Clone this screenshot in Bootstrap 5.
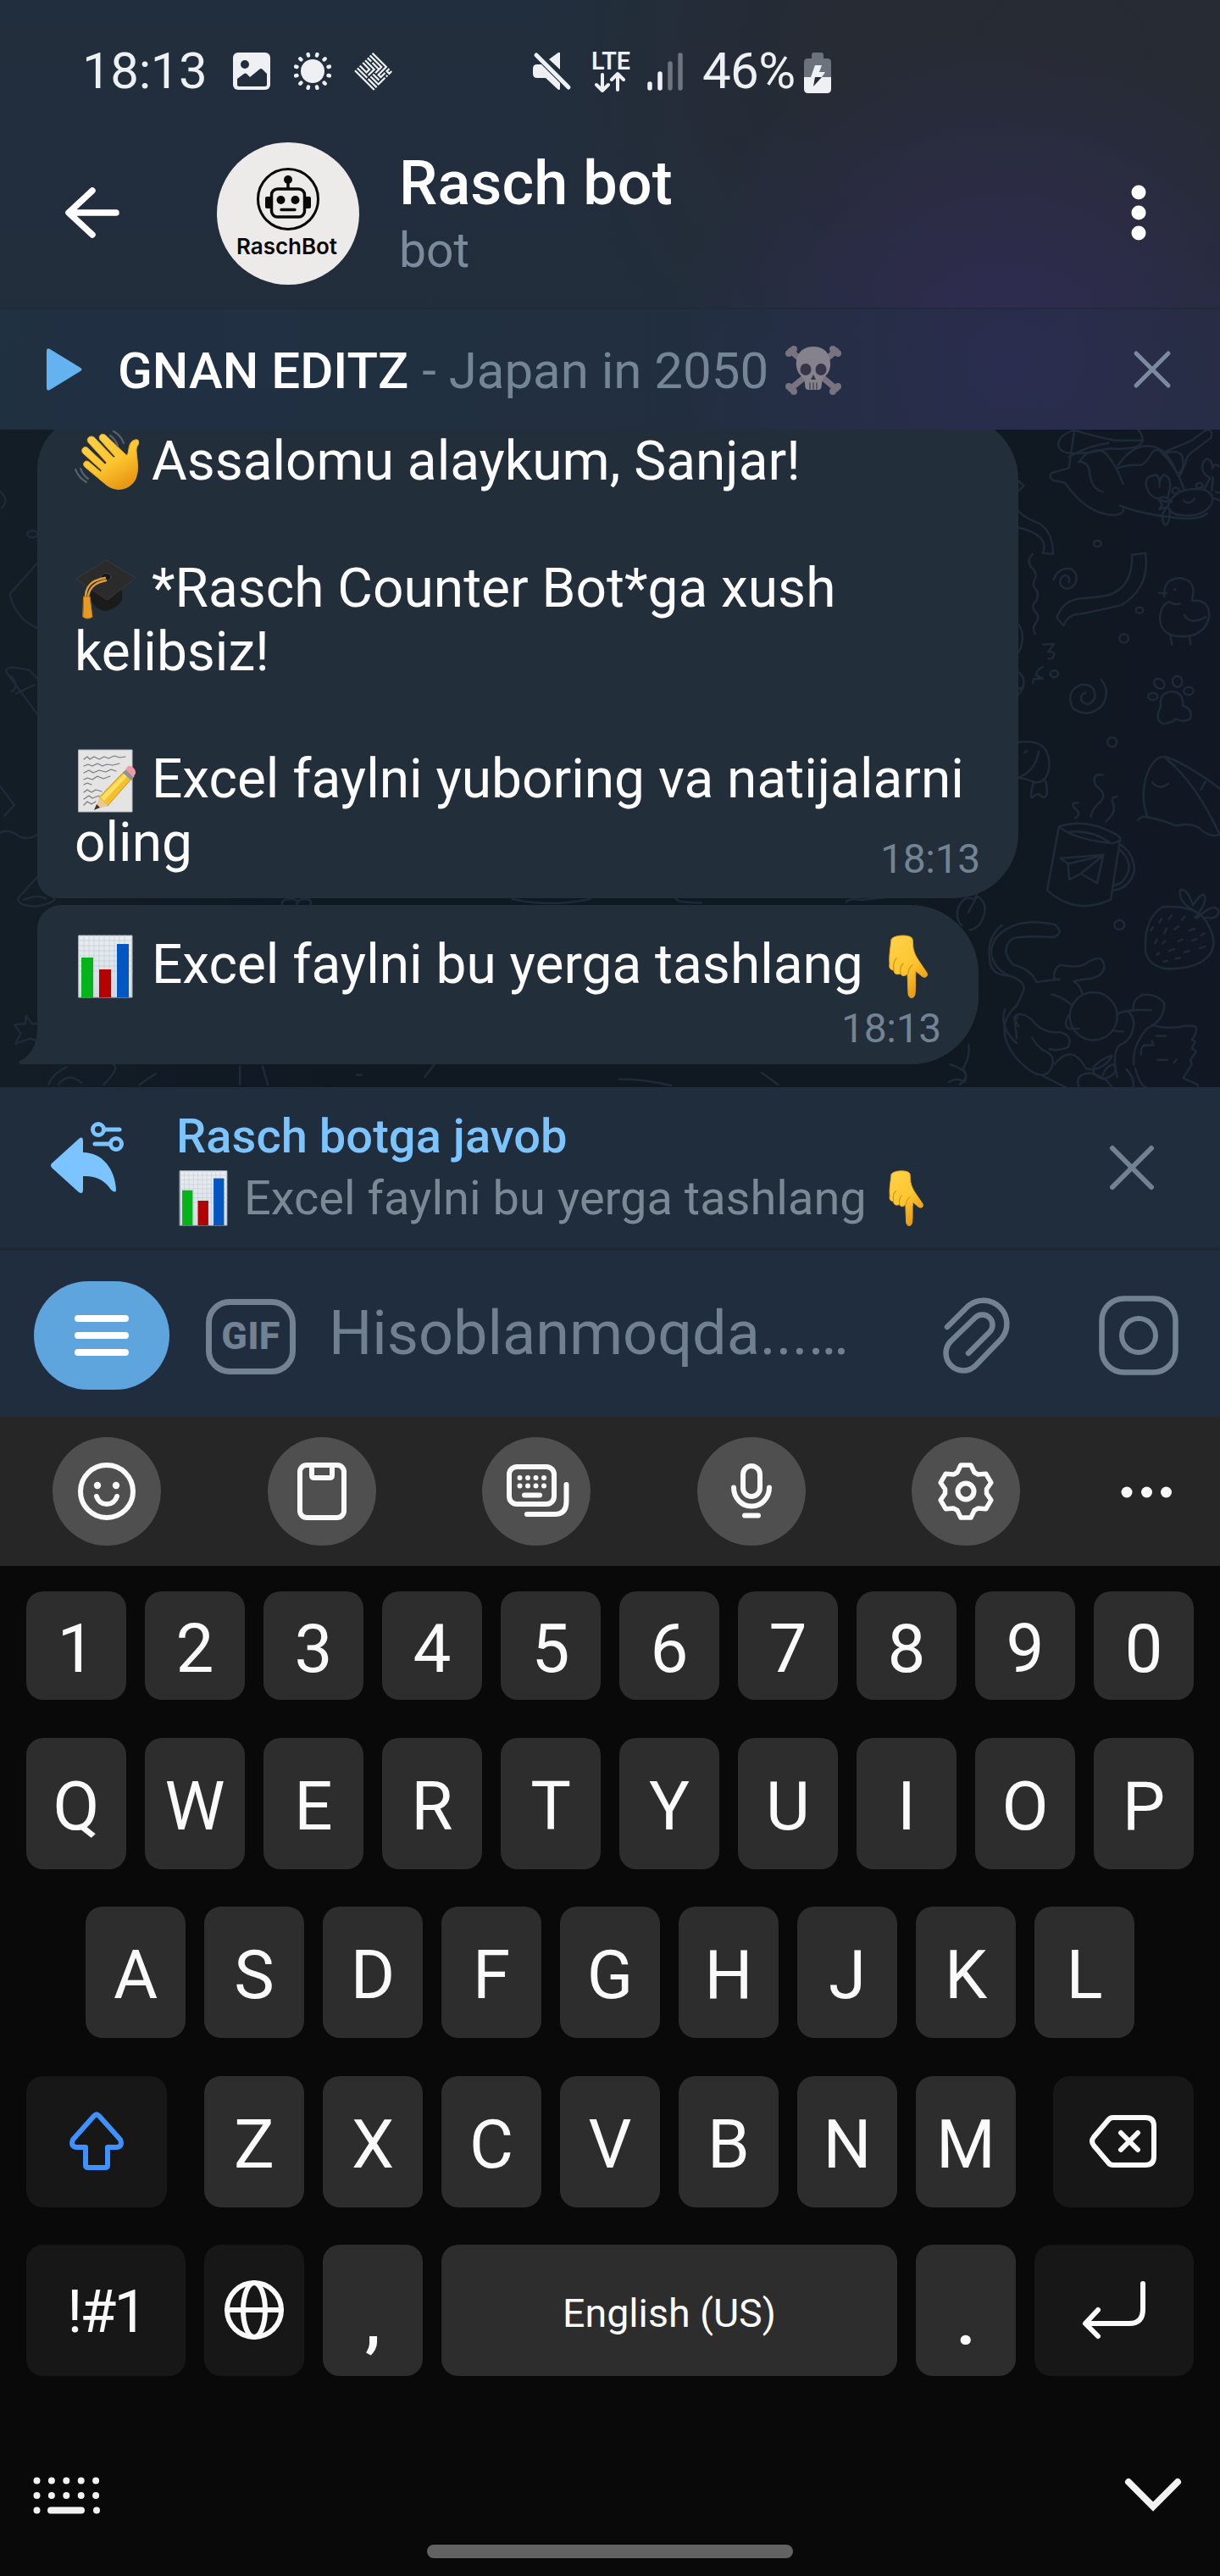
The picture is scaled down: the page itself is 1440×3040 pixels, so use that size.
<!DOCTYPE html>
<html lang="uz">
<head>
<meta charset="utf-8">
<meta name="viewport" content="width=device-width, initial-scale=1">
<title>Rasch bot</title>
<link href="https://cdn.jsdelivr.net/npm/bootstrap@5.3.0/dist/css/bootstrap.min.css" rel="stylesheet">
<style>
body{width:1440px;height:3040px;margin:0;background:#090909;font-family:Roboto,"Liberation Sans",sans-serif;overflow:hidden;color:#fff}
svg{display:block;flex:none;fill:none;stroke-linecap:round;stroke-linejoin:round}
.topzone{height:507px;background:radial-gradient(circle 400px at 1190px 430px,#2f2c55 0,rgba(46,44,80,.75) 35%,rgba(42,44,68,0) 100%),radial-gradient(ellipse 620px 480px at 1250px 60px,#272b33 0,#262b35 50%,rgba(38,44,53,0) 100%),linear-gradient(#212e3d,#222d3b)}
.statusbar{height:168px;padding:0 0 0 97px;color:#eef0f3;font-size:60px;line-height:168px}
.statusbar .clock{width:151px;letter-spacing:-.4px}
.statusbar .pct{width:109px;letter-spacing:-.6px}
.chathead{height:195px}
.chathead .peer{font-size:72px;font-weight:500;line-height:84px;letter-spacing:.1px}
.chathead .kind{font-size:57px;line-height:66px;color:#7a8b9b}
.player{height:144px;border-top:2px solid #1f2b39;background:linear-gradient(90deg,rgba(31,49,68,.75),rgba(36,46,72,.25));font-size:60px;line-height:142px}
.player span{padding-top:3px}
.song{font-weight:500}
.muted{color:#748595}
.chat{height:776px;background:linear-gradient(90deg,#121d26,#101822 30%,#111823);padding:0 0 27px 44px}
.wall{position:absolute;left:0;top:0}
.wall path,.wall circle,.wall ellipse{vector-effect:non-scaling-stroke;stroke:#1e2a38;stroke-width:2.5}
.bubble{position:relative;background:#222e3a;font-size:64px;line-height:75px;color:#fdfdfe}
.bub1{width:1158px;padding:17px 45px 28px 44px;border-radius:64px 76px 76px 24px}
.bub2{width:1111px;height:188px;padding:33px 40px 14px 44px;border-radius:28px 80px 80px 0}
.stamp{font-size:48px;letter-spacing:-.3px;color:#748393}
.bub1 .stamp{margin:19px 0 -19px}
.bub2 .stamp{margin-top:10px;margin-right:4px;line-height:56px}
.tail{position:absolute;left:-22px;bottom:0}
.ico{display:inline-block;width:76px;height:76px;vertical-align:-10px;margin:-8px -1px -8px 0}
.reply{height:193px;background:#202d3d;border-bottom:4px solid #1c2732}
.reply .rt{font-size:56px;font-weight:500;line-height:72px;letter-spacing:.05px;color:#7cc4ff}
.reply .rs{font-size:56px;line-height:74px;color:#7b8895}
.reply .ico{width:67px;height:67px;vertical-align:-8px;margin:-6px -1px -6px 0}
.entry{height:196px;background:#202d3f}
.menupill{width:160px;height:128px;border-radius:64px;background:#5ea5de}
.menupill i{display:block;width:64px;height:8px;border-radius:4px;background:#fff}
.gifbox{width:106px;height:89px;border:7px solid #728292;border-radius:28px;color:#728292;font-weight:800;font-size:45px;letter-spacing:.2px}
.hint{font-size:72px;color:#708090;line-height:84px}
.tools{height:176px;background:#262626;padding-left:62px}
.tool{width:128px;height:128px;border-radius:50%;background:#4f4f4f;margin-right:125.5px}
.tool svg,.iconkey svg{stroke:#fafafa;stroke-width:6}
.keys{height:1192px;background:#090909;padding:30px 31px 0}
.krow{height:155px;gap:22px;margin-bottom:44.3px}
.krow.nums{height:128px;margin-bottom:45px}
.key{width:118px;border-radius:20px;background:#2d2d2d;color:#fafafa;font-size:80px;line-height:1;padding-top:7px}
.key.dark{background:#171717}
.k166{width:166px}.k188{width:188px}.k538{width:538px}
.key.iconkey{padding-top:0}
.symkey{font-size:70px;letter-spacing:-3px;padding-top:3px}
.key.low{font-size:76px;font-weight:700}
.foot{height:110px;margin-top:116px;margin-bottom:-27px}
.homebar{width:432px;height:16px;border-radius:8px;background:#626262;margin-top:0}
</style>
</head>
<body>
<svg width="0" height="0" class="position-absolute">
<defs>
<linearGradient id="skin" x1="0" y1="0" x2=".6" y2="1"><stop offset="0" stop-color="#ffd24a"/><stop offset=".6" stop-color="#fdc631"/><stop offset="1" stop-color="#e99a14"/></linearGradient>
<linearGradient id="paper" x1="0" y1="0" x2="0" y2="1"><stop offset="0" stop-color="#e9edf0"/><stop offset="1" stop-color="#d3dce6"/></linearGradient>
<symbol id="wave" viewBox="0 0 76 76">
<g stroke="#e6a51f" stroke-width="1"><path fill="url(#skin)" d="M12 43c-4-4 1-9 5-6l14 12 1-2L10 27c-4-5 2-10 6-6l20 19 2-2-22-24c-3-5 3-9 7-6l23 24 2-1-18-20c-3-5 3-9 7-5l24 23c3 1 2-9 5-14 2-4 9-6 10-2 1 3-3 5-3 10 0 8 4 22-1 34-6 13-24 17-36 6z"/></g>
<g stroke="#5b5f67" stroke-width="2.2"><path d="M1 46q4 10 13 15M7 45q3 8 9 12M46 1q9 5 12 14M42 6q6 4 9 12"/></g>
</symbol>
<symbol id="gradcap" viewBox="0 0 76 76">
<path fill="#1b1b1c" d="M19 38v13c5 8 12 12 18 12 9-2 16-7 19-13V36z"/><path fill="#2b2b2c" stroke="#3a3a3b" d="M2 25 37 3l35 21-33 26z"/><ellipse cx="37" cy="23" rx="6" ry="4.5" fill="#171717" stroke="#444"/>
<path stroke="#e2a032" stroke-width="2.4" d="M36 24C26 26 14 29 13 45M37 27C28 29 19 32 16 45"/><path fill="#e79a24" stroke="#b97a1b" d="M11 46h7l3 24q-6 4-11 0z"/>
</symbol>
<symbol id="memo" viewBox="0 0 76 76">
<path fill="#e4e4e4" stroke="#bfc2c6" d="M5 2h63v73H5z"/>
<g stroke="#77787c" stroke-width="1.200"><path d="m11 13 4-3 3 3 5-3 6 3 6-3 5 2 7-3 6 2 7-1M11 21l5-2 5 2 6-3 6 3 5-2 7 1 8-2M11 29l6-3 5 3 7-3 8 2 6-3 6 2M11 37l4-2 6 2 6-4 7 3 8-3M11 43l4-2 5 2M11 52l4-3 5 3 5-3 7 2M11 60l6-4 4 3 8-3M11 67l4-4 5 3 5-3"/></g>
<path fill="#f3c02f" stroke="#c8941b" d="m29 58 30-31 9 8-29 33z"/><path fill="#ffdf63" d="m31 58 30-30 3 3-29 31z"/><path fill="#8d9297" d="m57 29 5-5 9 9-4 5z"/><path fill="#f29aa4" d="m60 25 3-4c4-1 10 4 9 9l-3 4z"/><path fill="#e9c896" d="m29 58 10 10-14 4z"/><path fill="#3a3431" d="m26 66 4 4-7 3z"/>
</symbol>
<symbol id="chart" viewBox="0 0 76 76">
<path fill="url(#paper)" stroke="#a9b3bd" d="M5 2h63v73H5z"/><g stroke="#c3ccd5" stroke-width=".7"><path d="M5 8h63M5 14h63M5 20h63M5 26h63M5 32h63M5 38h63M5 44h63M11 2v73M17 2v73M23 2v73M29 2v73M35 2v73M41 2v73M47 2v73M53 2v73M59 2v73"/></g>
<path fill="#06b31a" d="M8 28h14v47H8z"/><path fill="#b30202" d="M29 42h14v33H29z"/><path fill="#0457c0" d="M50 12h14v63H50z"/>
</symbol>
<symbol id="hand" viewBox="0 0 76 76">
<path fill="url(#skin)" stroke="#e6a51f" d="M17 7c1-6 23-7 25-1 1 5 0 10 2 15 2 7 8 14 15 25 2 4-2 7-6 4l-7-6c-1 8 0 19-1 27-1 6-7 6-8 0l-1-24c-3 4-7 3-8 0-5 2-8 0-8-4-4 0-6-3-5-7-1-10 1-19 2-29z"/><path stroke="#d9921a" stroke-width="1.300" d="M28 47c-1-5 0-9 3-12M20 42c-1-6 0-10 3-13M37 47c0-5 2-8 5-10"/>
</symbol>
<symbol id="skull" viewBox="0 0 66 58">
<g stroke="#77737f" stroke-width="7"><path d="M6 6 60 51M60 6 6 51"/></g><g fill="#77737f"><circle cx="4" cy="9" r="4"/><circle cx="10" cy="4" r="4"/><circle cx="62" cy="9" r="4"/><circle cx="56" cy="4" r="4"/><circle cx="4" cy="48" r="4"/><circle cx="10" cy="54" r="4"/><circle cx="62" cy="48" r="4"/><circle cx="56" cy="54" r="4"/></g>
<path fill="#85818d" d="M33 1c15 0 21 11 20 23-1 10-7 11-9 16-2 4 0 11-4 12H26c-4-1-2-8-4-12-2-5-8-6-9-16C12 12 18 1 33 1z"/><g fill="#37354a"><ellipse cx="24" cy="28" rx="6.500" ry="7"/><ellipse cx="42" cy="28" rx="6.500" ry="7"/><path d="m33 34 3 6h-6z"/></g><path stroke="#4b4859" stroke-width="1.500" d="M29 44v7M33 44v7M37 44v7"/>
</symbol>
</defs>
</svg>

<header class="topzone">
<div class="statusbar d-flex align-items-center">
<span class="clock">18:13</span>
<svg width="44" height="44" viewBox="0 0 44 44" style="margin-left:27px"><rect width="44" height="44" rx="6" fill="#eef0f3"/><circle cx="14" cy="14" r="5" fill="#222e3c"/><path fill="#222e3c" d="M5 31l8-6q2-1 3 0l4 4 11-9q2-2 4 0l5 5v13q0 2-2 2H7q-2 0-2-2z"/></svg>
<svg width="44" height="44" viewBox="-22 -22 44 44" style="margin-left:28px"><circle r="14" fill="#eef0f3"/><g stroke="#eef0f3" stroke-width="4.4"><path d="M5-18.500 5.400-20M13.600-13.600l1.100-1.100M18.500-5l1.500-.4M18.500 5l1.500.4M13.600 13.600l1.100 1.100M5 18.500l.4 1.500M-5 18.500l-.4 1.500M-13.600 13.600l-1.100 1.100M-18.500 5l-1.500.4M-18.500-5l-1.500-.4M-13.600-13.600l-1.100-1.100M-5-18.500l-.4-1.500"/></g></svg>
<svg width="46" height="46" viewBox="-23 -23 46 46" style="margin-left:27px"><g transform="rotate(-45)" stroke="#eef0f3" stroke-width="2.200" stroke-linecap="square" stroke-linejoin="miter"><path d="M-15-15V15M-11-15V-1M-11 3V15M-7-15V-5h5V-15M-7-1h9V-15M-7 3V15H3M-3 3V11M1 3H6V-7M6-11V-15M10-15V3H7M14-15V7H1M1 7V11H7M14 11H11V15H14M7 15v0M-3 15v0"/></g></svg>
<svg width="46" height="46" viewBox="0 0 46 46" style="margin-left:165px"><g fill="#eef0f3"><path d="M32 1v20L19 9 30 1z"/><path d="M0 20q0-5 5-5h5l22 22v7q-1 2-3 0L15 31H5q-5 0-5-5z"/></g><path stroke="#222e3c" stroke-width="3.500" d="M8 1 46 39"/><path stroke="#eef0f3" stroke-width="5" d="M4 4 42 42"/></svg>
<svg width="51" height="50" viewBox="-2 0 51 50" style="margin-left:21px"><text x="0" y="22.500" font-size="29" font-weight="600" fill="#eef0f3" textLength="46" lengthAdjust="spacingAndGlyphs" font-family="Roboto">LTE</text><g stroke="#eef0f3" stroke-width="4"><path d="M13 29v18M6 41l7 7 7-7M31 47V29M24 35l7-7 7 7"/></g></svg>
<svg width="43" height="46" viewBox="0 0 43 46" style="margin-left:17px"><g stroke-width="5.500" stroke="#eef0f3"><path d="M3 38v5M15 26v17"/><path stroke="#6e757e" d="M27 14v29M39 4v39"/></g></svg>
<span class="pct" style="margin-left:22px">46%</span>
<svg width="32" height="48" viewBox="0 0 32 48" style="margin:3px 0 0 11px"><path fill="#6c727b" d="M9 7V3q0-3 3-3h8q3 0 3 3v4h5q4 0 4 5v18H0V12q0-5 4-5z"/><path fill="#eef0f3" d="M0 29h32v14q0 5-5 5H5q-5 0-5-5zM13 15h8l-3 8h7l-4 6H8z"/><path fill="#222a33" d="M13 29h8L11 40z"/></svg>
</div>
<div class="chathead d-flex align-items-start">
<svg width="65" height="60" viewBox="0 0 65 60" style="margin:53px 0 0 77px"><path stroke="#fff" stroke-width="7.500" d="M60 30H5M32 4 4 30l28 26"/></svg>
<svg width="168" height="168" viewBox="0 0 168 168" style="margin-left:114px"><circle cx="84" cy="84" r="84" fill="#ecebea"/><circle cx="84" cy="67" r="35.500" stroke="#090909" stroke-width="3"/><g stroke="#090909" stroke-width="3.500"><rect x="64.500" y="55" width="39" height="33" rx="7"/><path d="M84 54V44M76 79.500h16"/></g><g fill="#090909"><circle cx="84" cy="44" r="5"/><circle cx="75.500" cy="68" r="5"/><circle cx="92.500" cy="68" r="5"/><path d="M63 64h-4q-2 0-2 2v10q0 2 2 2h4zM105 64h4q2 0 2 2v10q0 2-2 2h-4z"/></g><text x="23" y="132" font-family="Inter" font-size="26" font-weight="600" fill="#090909" textLength="119">RaschBot</text></svg>
<div style="margin:7px 0 0 47px"><div class="peer">Rasch bot</div><div class="kind" style="margin-top:4px">bot</div></div>
<svg width="18" height="66" viewBox="0 0 18 66" class="ms-auto" style="margin:50px 87px 0 0"><g fill="#fff"><circle cx="9" cy="9" r="8.500"/><circle cx="9" cy="33" r="8.500"/><circle cx="9" cy="57" r="8.500"/></g></svg>
</div>
<div class="player d-flex align-items-center">
<svg width="42" height="50" viewBox="0 0 42 50" style="margin-left:55px"><path fill="#64b2ef" d="M0 3q0-4 4-2l36 22q3 2 0 4L4 49q-4 2-4-2z"/></svg>
<span class="song" style="margin-left:42px">GNAN EDITZ</span><span class="muted" style="margin-left:16px">- Japan in 2050</span>
<svg width="66" height="58" style="margin:2px 0 0 20px"><use href="#skull"/></svg>
<svg width="46" height="46" viewBox="0 0 46 46" class="ms-auto" style="margin-right:57px"><path stroke="#7b8a9f" stroke-width="5" d="M4 4l38 38M42 4 4 42"/></svg>
</div>
</header>

<main class="chat position-relative overflow-hidden d-flex flex-column justify-content-end align-items-start">
<svg class="wall" width="1440" height="776" viewBox="0 507 1440 776">
<g transform="translate(1120 500) scale(.33333 .5038)">
<path d="M445 12 425 104 365 115q-15 10 5 18l40 5q80 75 175 76 40-2 32-20l-12-2q80 20 190 28 90 8 120-10"/><path d="M445 15q-55 10-58 35 10 35 180 8 110 5 119-18 0-15-15-25M450 17q100 18 135 22h98M425 78q60-25 140-33M460 90 480 74q45-20 75-5 35 25 62 72M462 88q35 5 36 25 5 40 48 47M596 105q30-10 84-8 20-5 40-30 15-10 28-3 60 40 84 88M598 98q50-48 110-46 60 0 100 64 30-5 18-40-10-15-55-8M768 65l90-25 50-24q30-5 20 17l-70 35q-20 10-20 25l-20 29"/>
<path d="M776 197q-5-15 40-37 40-10 85-6 45 10 28 35-30 30-100 26-45-2-53-18zM832 180q20 12 38-5M776 170q20-45-15-50-15 5-16 28 5-30-20-27-45 5-16 41 20 18 50 10 18 0 28 12M790 180l-25 3-22-6 12 13-10 10 25-4-15 18 5 20q12 8 20-10l3-22M905 152l20-25q-30-10-28-28 10-25 30-12 8 10 5 18 10-15 24-5M935 125l-4 32M940 175l20 5M945 160l15 2"/><ellipse cx="803" cy="157" rx="12" ry="7"/><ellipse cx="887" cy="145" rx="12" ry="6"/>
<path d="M247 135l18 10-18 12M247 205q20 15 60 25 60 15 62 75l-38-2q15-15-5-35-30-18-80-25M296 306q-22 12-5 30 20 10 16 25-15 15-2 25 18 10 3 30-20 10-2 25 20 10 0 28-12 10 0 24M370 365q20-30 62-25 30 10 15 35-25 20-50 5-10-20 15-25 20 3 12 17M648 307l48-4q18 80-85 122-100 15-140 20-50 0-65 28l-24-18q20-40 80-45 90-5 110-10 80-20 76-93z"/>
<path d="M763 405q-5-45 62-43 55 8 35 53 60-5 62 33-10 45-80 50-95 5-95-45 5-30 33-36 15 8 38 5M745 397h25M834 448q20 25 76 5M783 493l7 24M852 498l4 18M797 388h5M335 517l38-1-22 18q35 0 15 16l-14 1M297 608l3-10 33-1-25-8q5-15 25-19M247 470q28 30 0 66M247 582q37 20 0 52M247 620h15"/>
<ellipse cx="526" cy="281" rx="13" ry="7"/><ellipse cx="675" cy="437" rx="13" ry="7"/><ellipse cx="620" cy="503" rx="16" ry="10"/><ellipse cx="373" cy="586" rx="14" ry="8"/><ellipse cx="578" cy="746" rx="17" ry="11"/><ellipse cx="604" cy="1174" rx="18" ry="11"/>
<path d="M540 600q35 30 0 62-50 30-100 5-30-38 25-55 55-5 52 30-20 25-46 8-10-15 14-20"/>
<ellipse cx="745" cy="609" rx="19" ry="11" transform="rotate(15 745 609)"/><ellipse cx="809" cy="604" rx="17" ry="13"/><ellipse cx="849" cy="626" rx="17" ry="9"/><ellipse cx="722" cy="639" rx="17" ry="8"/><path d="M750 660q-5-30 38-33 45 2 40 33 40 10 25 32-20 8-50 0-20 10-45 11-30-10-10-37z"/>
<path d="M247 746q115-10 108 60-10 40-55 33-30-8-53-10M318 767q-10 45-70 62M268 770l8-4M300 840q-15 35-5 36 15-10 25-8 20 15 28-2 0-15-5-28"/>
<path d="M702 920q-30-60 10-115 25-30 60-24 80 20 190 75M765 782q110 60 194 180-30 10-75-16-30-12-80-4-50-15-100-20-20-5-33 6M720 840q25 20 57 3M893 857l15-18"/>
<path d="M390 943q100-20 205 20 30 15-18 20-140-10-187-40l-42 150q100 60 225 22l34-145M428 956q80-5 145 27M606 985q55 25 50 65-20 40-75 43M605 998q35 20 33 45-15 35-52 38M395 1018l152-8-22 66-58-22 80-43-123 20zM422 1035l4 33 45-15M547 823q-45-5-27 25 40 18 20 35-35 20-37 38M457 888q-30-2-10 14 25 10 0 22M594 874q-25 0-10 20 5 20-28 38"/>
<path d="M697 1240q-10-80 60-108 120-5 155 35 55 60-10 90-40 20-130 20-60-5-75-37zM872 1142q-60-20-53-50 25-5 45 36 40-40 44-15-5 20-36 44M880 1158q60-40 76-15-10 20-45 14M715 1187l8-8M745 1168l8-8M780 1160l8-8M825 1162l10-7M763 1194l8-12M798 1185l16-8M852 1187l18-4M730 1217l7-9M756 1218l10-6M812 1212l16-4M862 1211l15-4M895 1198l10-4M736 1244l8-4M780 1235l18-4M833 1238l18-3M888 1229l18-4M760 1260l14-2M803 1253l16-2"/>
<path d="M310 1308q120-10 65-5-10-25 20-35 70 10 100-8 55-20 55 15-10 25-70 26l-38 5q20 8 30 28M310 1308q-20-30-80-40-50-30-10-60 30-10 150-5 40-10 5-30-70-10-130-1-95 20-95 70 10 40 80 55 50 15 30 38l-20 28q-85 50-5 120 80 60 120 35 30-30-5-45-35-10-55-35M363 1337q30 2 75 26M240 1440l-8-50q20-15 60 5 40 35 100 30 50 8 30 35-30 10-65 5M246 1412l-14-20 12 0"/>
<ellipse cx="512" cy="1388" rx="84" ry="56"/><path d="M424 1385q-20 25 0 32h37M595 1385q50-25 60 20-5 40-50 50-30 20-8 75M585 1422l33 2M603 1380q50-10 115-6M655 1375q-10-25 30-37 50-5 78 20 0 40-60 58-55 40-48 85M680 1478q0-25 20-22h25l-5-10M720 1408q40 10 100 5 30-5 55 0 5 15-15 30l12 5-12 15 15 8-20 20 5 10-30 32 50 15q10 20-10 22M735 1434h33M737 1490h37M797 1497l10-8M660 1510q15 40 40 45M375 1500q60-50 110 10 30 8 70-10 30-20 20-20-40 10-60 25-15 20 30 30 60-10 40-35-30 5-40 25M325 1525l90 30M460 1553q-15-30 40-32 60 10 75 32M628 1512q30 20 25 42"/>
<path d="M30 1140q20-40 60-25l10-15M68 1145l32-38q50 20 10 65-20 14-36 14M30 1140q-3 25 15 35M70 1455q5 30-20 55 20 20 5 32-25-12-55 0"/></g>
<g transform="translate(0 500) scale(.7653 .4974)">
<path d="M0 160q15 20 3 40M58 330 15 405q10 60 43 80M58 690 10 590q-5-20 35-5l13 20M18 600q12 25 0 35M25 640l28-20M0 860l22 45-15 25M0 970q15-10 30 10 15 8 27-5M58 1075l-30 50q-2 20 30 20 30-10 25-20M36 1130q25-15 35-2M40 1405l10 20 20-5-12 22 10 25-22-8-22 12 8-25-10-20 17-2zM435 1142q-2-15 15-14 15 2 5 20M458 1142q0-16 15-14 10 2 5 15M790 1128q60 20 120 0M1042 1125q0 12 40 12M1305 1135q5-10 25-5l37-6M75 1568q5-25 28-42M90 1568q15-30 35-5M175 1520q10 10-15 48M240 1542l-25 26M370 1525v43M405 1525l8 43M550 1545h8M655 1550l15-30M955 1555q40 0 80 15M1175 1540l25 28M1465 1520q40 20 15 48M1545 1190q-25 30-18 90 5 30 30 30M1550 1390q-10 40 18 80"/><circle cx="50" cy="262" r="8"/></g>
</svg>
<section class="bubble bub1">
<div><svg class="ico"><use href="#wave"/></svg> Assalomu alaykum, Sanjar!</div><br>
<div><svg class="ico"><use href="#gradcap"/></svg> *Rasch Counter Bot*ga xush<br>kelibsiz!</div><br>
<div class="text-nowrap"><svg class="ico"><use href="#memo"/></svg> Excel faylni yuboring va natijalarni</div>
<div class="d-flex justify-content-between"><span>oling</span><span class="stamp">18:13</span></div>
</section>
<section class="bubble bub2" style="margin-top:8px">
<svg class="tail" width="40" height="60" viewBox="0 0 40 60"><path fill="#222e3a" d="M22 0v20Q20 48 1 56q-2 3 2 4h37V0z"/></svg>
<div class="text-nowrap"><svg class="ico"><use href="#chart"/></svg> Excel faylni bu yerga tashlang <svg class="ico"><use href="#hand"/></svg></div>
<div class="stamp text-end">18:13</div>
</section>
</main>

<section class="reply d-flex align-items-start">
<svg width="92" height="92" viewBox="58 1322 92 92" style="margin:39px 0 0 58px"><path fill="#7cc4ff" d="M98 1347q0-7-5-3l-32 29q-2 2 0 5l32 29q5 3 5-3v-16q22-1 33 16 6 5 6 0c-1-24-16-44-39-44z"/><g stroke="#7cc4ff" stroke-width="5"><circle cx="116" cy="1333" r="6.500"/><circle cx="137" cy="1350" r="6.500"/><path d="M123 1333h18M112 1350h18"/></g></svg>
<div style="margin:22px 0 0 58px"><div class="rt">Rasch botga javob</div><div class="rs text-nowrap"><svg class="ico"><use href="#chart"/></svg> Excel faylni bu yerga tashlang <svg class="ico"><use href="#hand"/></svg></div></div>
<svg width="54" height="54" viewBox="0 0 54 54" class="ms-auto" style="margin:68px 77px 0 0"><path stroke="#728292" stroke-width="6" d="M4 4l46 46M50 4 4 50"/></svg>
</section>
<section class="entry d-flex align-items-center">
<div class="menupill d-flex flex-column align-items-center justify-content-center" style="margin:4px 0 0 40px;gap:12px"><i></i><i></i><i></i></div>
<div class="gifbox d-flex align-items-center justify-content-center" style="margin:6px 0 0 43px">GIF</div>
<span class="hint" style="margin-left:39px">Hisoblanmoqda...…</span>
<svg width="84" height="94" viewBox="1111 1529 84 94" class="ms-auto" style="margin-top:4px"><path stroke="#728292" stroke-width="6.500" d="M1118 1566 1143 1541A27.700 27.700 0 0 1 1182 1580L1152 1611A20.500 20.500 0 0 1 1122 1583L1151 1555A12 12 0 0 1 1168 1572L1143 1597"/></svg>
<svg width="94" height="94" viewBox="0 0 94 94" style="margin:4px 49px 0 102px"><rect x="3.500" y="3.500" width="87" height="87" rx="26" stroke="#728292" stroke-width="6.500"/><circle cx="47" cy="47" r="20" stroke="#728292" stroke-width="6"/></svg>
</section>

<section class="tools d-flex align-items-center">
<div class="tool d-flex align-items-center justify-content-center"><svg width="72" height="72" viewBox="-36 -36 72 72"><circle r="31"/><path d="M-12 6a12.500 12.500 0 0 0 24 0"/><g fill="#fafafa" stroke="none"><circle cx="-11" cy="-7" r="4.200"/><circle cx="11" cy="-7" r="4.200"/></g></svg></div>
<div class="tool d-flex align-items-center justify-content-center"><svg width="72" height="72" viewBox="-36 -36 72 72"><rect x="-26" y="-31" width="52" height="62" rx="8"/><path d="M-12-31v12q0 3 3 3H9q3 0 3-3v-12"/></svg></div>
<div class="tool d-flex align-items-center justify-content-center"><svg width="84" height="72" viewBox="-42 -36 84 72"><rect x="-32" y="-29" width="53" height="44" rx="9"/><path d="M35.500-8v20q0 15-14 15H-11M-14 4.500H4" /><g fill="#fafafa" stroke="none"><circle cx="-19.500" cy="-16" r="3"/><circle cx="-10" cy="-16" r="3"/><circle cx="-.5" cy="-16" r="3"/><circle cx="9" cy="-16" r="3"/><circle cx="-19.500" cy="-6.500" r="3"/><circle cx="-10" cy="-6.500" r="3"/><circle cx="-.5" cy="-6.500" r="3"/><circle cx="9" cy="-6.500" r="3"/></g></svg></div>
<div class="tool d-flex align-items-center justify-content-center"><svg width="72" height="72" viewBox="-36 -36 72 72"><rect x="-10" y="-30" width="20" height="36" rx="10"/><path d="M-21-4.500a21 22 0 0 0 42 0M-8 28.500H8"/></svg></div>
<div class="tool d-flex align-items-center justify-content-center"><svg width="76" height="76" viewBox="-38 -38 76 76"><path stroke-width="5.500" d="M-10-22.500-6-31 6-31 10-22.500 14.500-19.900 23.800-20.700 29.800-10.300 24.500-2.600 24.500 2.600 29.800 10.300 23.800 20.700 14.500 19.900 10 22.500 6 31-6 31-10 22.500-14.500 19.900-23.800 20.700-29.800 10.300-24.500 2.600-24.500-2.600-29.800-10.300-23.800-20.700-14.500-19.900z"/><circle r="9.500"/></svg></div>
<svg width="62" height="14" viewBox="0 0 62 14" style="margin:2px 0 0 -7px"><g fill="#fafafa"><circle cx="7" cy="7" r="6.500"/><circle cx="30.500" cy="7" r="6.500"/><circle cx="53.500" cy="7" r="6.500"/></g></svg>
</section>

<section class="keys">
<div class="krow nums d-flex justify-content-center">
<div class="key d-flex align-items-center justify-content-center">1</div><div class="key d-flex align-items-center justify-content-center">2</div><div class="key d-flex align-items-center justify-content-center">3</div><div class="key d-flex align-items-center justify-content-center">4</div><div class="key d-flex align-items-center justify-content-center">5</div><div class="key d-flex align-items-center justify-content-center">6</div><div class="key d-flex align-items-center justify-content-center">7</div><div class="key d-flex align-items-center justify-content-center">8</div><div class="key d-flex align-items-center justify-content-center">9</div><div class="key d-flex align-items-center justify-content-center">0</div>
</div>
<div class="krow d-flex justify-content-center">
<div class="key d-flex align-items-center justify-content-center">Q</div><div class="key d-flex align-items-center justify-content-center">W</div><div class="key d-flex align-items-center justify-content-center">E</div><div class="key d-flex align-items-center justify-content-center">R</div><div class="key d-flex align-items-center justify-content-center">T</div><div class="key d-flex align-items-center justify-content-center">Y</div><div class="key d-flex align-items-center justify-content-center">U</div><div class="key d-flex align-items-center justify-content-center">I</div><div class="key d-flex align-items-center justify-content-center">O</div><div class="key d-flex align-items-center justify-content-center">P</div>
</div>
<div class="krow d-flex justify-content-center">
<div class="key d-flex align-items-center justify-content-center">A</div><div class="key d-flex align-items-center justify-content-center">S</div><div class="key d-flex align-items-center justify-content-center">D</div><div class="key d-flex align-items-center justify-content-center">F</div><div class="key d-flex align-items-center justify-content-center">G</div><div class="key d-flex align-items-center justify-content-center">H</div><div class="key d-flex align-items-center justify-content-center">J</div><div class="key d-flex align-items-center justify-content-center">K</div><div class="key d-flex align-items-center justify-content-center">L</div>
</div>
<div class="krow d-flex justify-content-between">
<div class="key dark k166 iconkey d-flex align-items-center justify-content-center"><svg width="72" height="76" viewBox="-36 -38 72 76"><path style="stroke:#3e91ff" d="M-3-30q3-3 6 0L28-2q3 8-4 9H13v21q0 3-3 3h-20q-3 0-3-3V7h-11q-7-1-4-9z"/></svg></div>
<div class="d-flex" style="gap:22px"><div class="key d-flex align-items-center justify-content-center">Z</div><div class="key d-flex align-items-center justify-content-center">X</div><div class="key d-flex align-items-center justify-content-center">C</div><div class="key d-flex align-items-center justify-content-center">V</div><div class="key d-flex align-items-center justify-content-center">B</div><div class="key d-flex align-items-center justify-content-center">N</div><div class="key d-flex align-items-center justify-content-center">M</div></div>
<div class="key dark k166 iconkey d-flex align-items-center justify-content-center"><svg width="84" height="66" viewBox="-42 -33 84 66"><path d="M-12-28h38q10 0 10 10v36q0 10-10 10h-38q-4 0-6-3l-17-20q-4-5 0-10l17-20q2-3 6-3zM-3-10l20 20M17-10-3 10"/></svg></div>
</div>
<div class="krow d-flex">
<div class="key dark k188 symkey d-flex align-items-center justify-content-center">!#1</div>
<div class="key dark iconkey d-flex align-items-center justify-content-center"><svg width="74" height="74" viewBox="-37 -37 74 74"><circle r="32"/><ellipse rx="13" ry="32"/><path d="M-32 0h64"/></svg></div>
<div class="key low d-flex align-items-center justify-content-center" style="padding-top:27px">,</div>
<div class="key k538 d-flex align-items-center justify-content-center" style="font-size:46.500px">English (US)</div>
<div class="key low d-flex align-items-center justify-content-center" style="padding-top:27px">.</div>
<div class="key dark k188 iconkey d-flex align-items-center justify-content-center"><svg width="80" height="72" viewBox="1276 2691 80 72"><path d="M1350 2696v30q0 17-16 17h-51M1297 2727l-15 16 15 15"/></svg></div>
</div>
<div class="foot d-flex justify-content-between align-items-start" style="padding-top:1px">
<svg width="80" height="46" viewBox="40 2920 80 46" style="margin-left:8px"><g stroke="#f2f2f2" stroke-width="8"><path stroke-dasharray="0 17.400" d="M44.500 2926.500h71M44.500 2944h71"/><path d="M44.500 2961.500h0M115 2961.500h0M61 2961.500h36"/></g></svg>
<svg width="68" height="44" viewBox="0 0 68 44" style="margin:2px 14px 0 0"><path stroke="#f2f2f2" stroke-width="8" stroke-linejoin="miter" d="M5 6l29 29L63 6"/></svg>
</div>
<div class="homebar mx-auto"></div>
</section>
<script src="https://cdn.jsdelivr.net/npm/bootstrap@5.3.0/dist/js/bootstrap.bundle.min.js"></script>
</body>
</html>
